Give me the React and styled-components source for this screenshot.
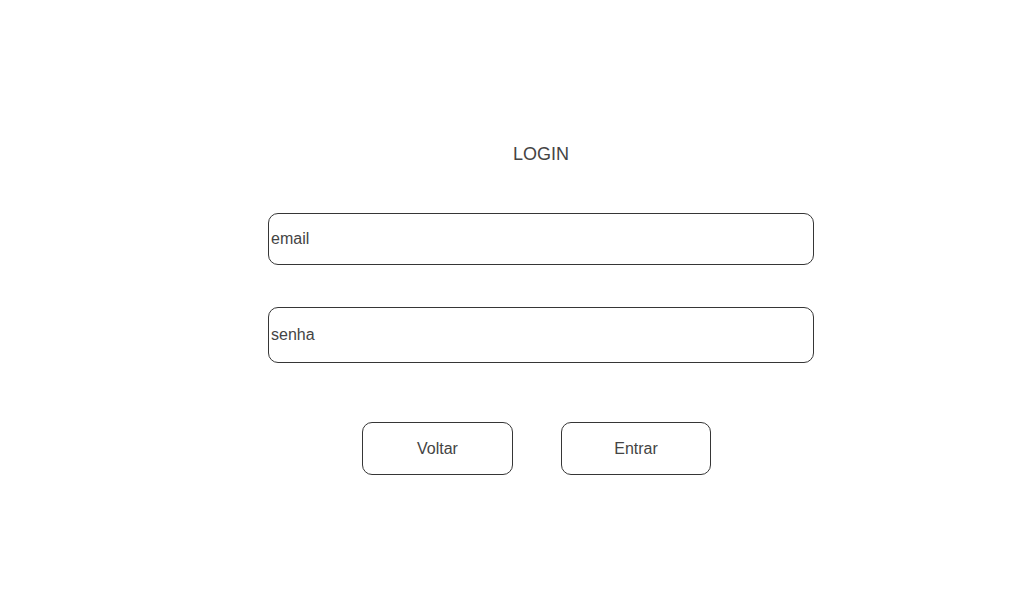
import styled, { createGlobalStyle } from 'styled-components';

const GlobalStyle = createGlobalStyle`
  html, body {
    margin: 0;
    padding: 0;
    background: #ffffff;
    font-family: "Liberation Sans", Arial, sans-serif;
    color: #444444;
  }
`;

const Page = styled.div`
  display: flex;
  justify-content: center;
  padding: 144px 0 0 58px;
  height: 600px;
  box-sizing: border-box;
`;

const Form = styled.form`
  width: 546px;
  display: flex;
  flex-direction: column;
  align-items: stretch;
`;

const Title = styled.h1`
  margin: 0 0 49px;
  font-size: 18px;
  line-height: 20px;
  font-weight: normal;
  text-align: center;
  color: #444444;
`;

const Field = styled.input`
  box-sizing: border-box;
  height: ${(p) => p.$h}px;
  margin-bottom: ${(p) => p.$gap}px;
  padding: 0 2px;
  border: 1px solid #363636;
  border-radius: 10px;
  font-family: inherit;
  font-size: 16px;
  color: #444444;
  outline: none;

  &::placeholder {
    color: #444444;
    opacity: 1;
  }
`;

const Actions = styled.div`
  display: flex;
  justify-content: center;
  gap: 48px;
  padding-right: 9px;
`;

const Button = styled.button`
  box-sizing: border-box;
  width: ${(p) => p.$w}px;
  height: 53px;
  background: #ffffff;
  border: 1px solid #363636;
  border-radius: 10px;
  font-family: inherit;
  font-size: 16px;
  color: #444444;
  cursor: pointer;
`;

export default function App() {
  return (
    <>
      <GlobalStyle />
      <Page>
        <Form onSubmit={(e) => e.preventDefault()}>
          <Title>LOGIN</Title>
          <Field type="email" placeholder="email" $h={52} $gap={42} />
          <Field type="password" placeholder="senha" $h={56} $gap={59} />
          <Actions>
            <Button type="button" $w={151}>Voltar</Button>
            <Button type="submit" $w={150}>Entrar</Button>
          </Actions>
        </Form>
      </Page>
    </>
  );
}
